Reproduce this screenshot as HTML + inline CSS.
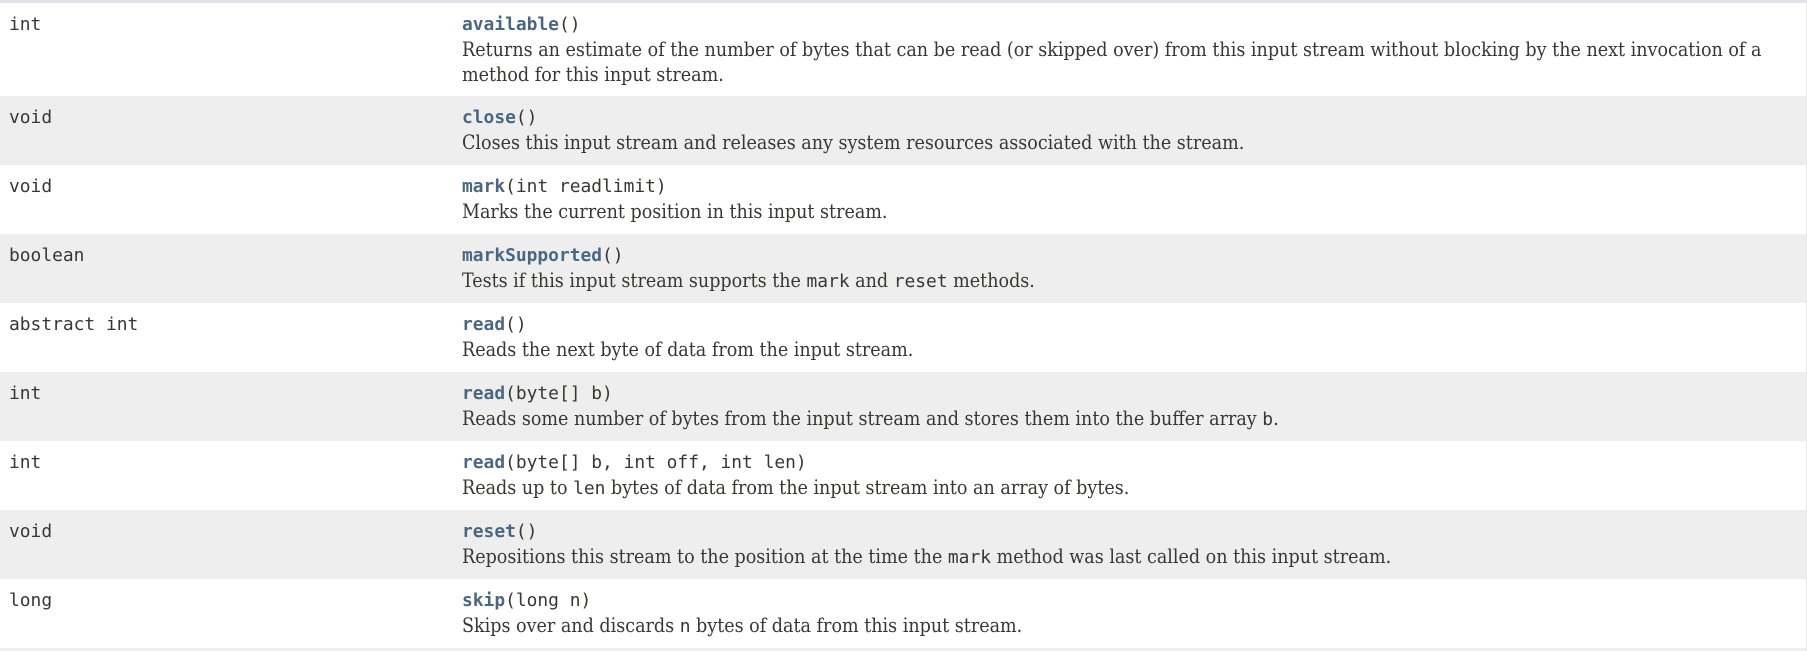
<!DOCTYPE html>
<html><head><meta charset="utf-8"><style>
html,body{margin:0;padding:0;background:#fff;}
body{width:1807px;height:651px;overflow:hidden;position:relative;}
.wrap{position:absolute;left:0;top:0;width:1806px;border-top:3px solid #dee3e9;border-right:1px solid #e8e8e8;border-bottom:3px solid #eeeeee;}
.row{display:flex;box-sizing:border-box;height:69px;padding-top:9px;}
.row.first{height:93px;}
.g{background:#eeeeee;}
.c1{width:453px;padding-left:9px;box-sizing:border-box;font-family:"DejaVu Sans Mono",monospace;font-size:17.9px;line-height:25px;color:#353833;}
.c2{flex:1;padding-left:9px;padding-right:10px;font-family:"DejaVu Serif Condensed","DejaVu Serif",serif;font-stretch:condensed;font-size:19.5px;line-height:25px;color:#353833;}
.m{font-family:"DejaVu Sans Mono",monospace;font-size:17.9px;font-stretch:normal;}
.m b{color:#4a6782;}
code{font-family:"DejaVu Sans Mono",monospace;font-size:17.9px;font-stretch:normal;}
</style></head><body>
<div class="wrap">
<div class="row first"><div class="c1">int</div><div class="c2"><div class="m"><b>available</b>()</div><div>Returns an estimate of the number of bytes that can be read (or skipped over) from this input stream without blocking by the next invocation of a method for this input stream.</div></div></div>
<div class="row g"><div class="c1">void</div><div class="c2"><div class="m"><b>close</b>()</div><div>Closes this input stream and releases any system resources associated with the stream.</div></div></div>
<div class="row"><div class="c1">void</div><div class="c2"><div class="m"><b>mark</b>(int&nbsp;readlimit)</div><div>Marks the current position in this input stream.</div></div></div>
<div class="row g"><div class="c1">boolean</div><div class="c2"><div class="m"><b>markSupported</b>()</div><div>Tests if this input stream supports the <code>mark</code> and <code>reset</code> methods.</div></div></div>
<div class="row"><div class="c1">abstract int</div><div class="c2"><div class="m"><b>read</b>()</div><div>Reads the next byte of data from the input stream.</div></div></div>
<div class="row g"><div class="c1">int</div><div class="c2"><div class="m"><b>read</b>(byte[]&nbsp;b)</div><div>Reads some number of bytes from the input stream and stores them into the buffer array <code>b</code>.</div></div></div>
<div class="row"><div class="c1">int</div><div class="c2"><div class="m"><b>read</b>(byte[]&nbsp;b, int&nbsp;off, int&nbsp;len)</div><div>Reads up to <code>len</code> bytes of data from the input stream into an array of bytes.</div></div></div>
<div class="row g"><div class="c1">void</div><div class="c2"><div class="m"><b>reset</b>()</div><div>Repositions this stream to the position at the time the <code>mark</code> method was last called on this input stream.</div></div></div>
<div class="row"><div class="c1">long</div><div class="c2"><div class="m"><b>skip</b>(long&nbsp;n)</div><div>Skips over and discards <code>n</code> bytes of data from this input stream.</div></div></div>
</div>
</body></html>
